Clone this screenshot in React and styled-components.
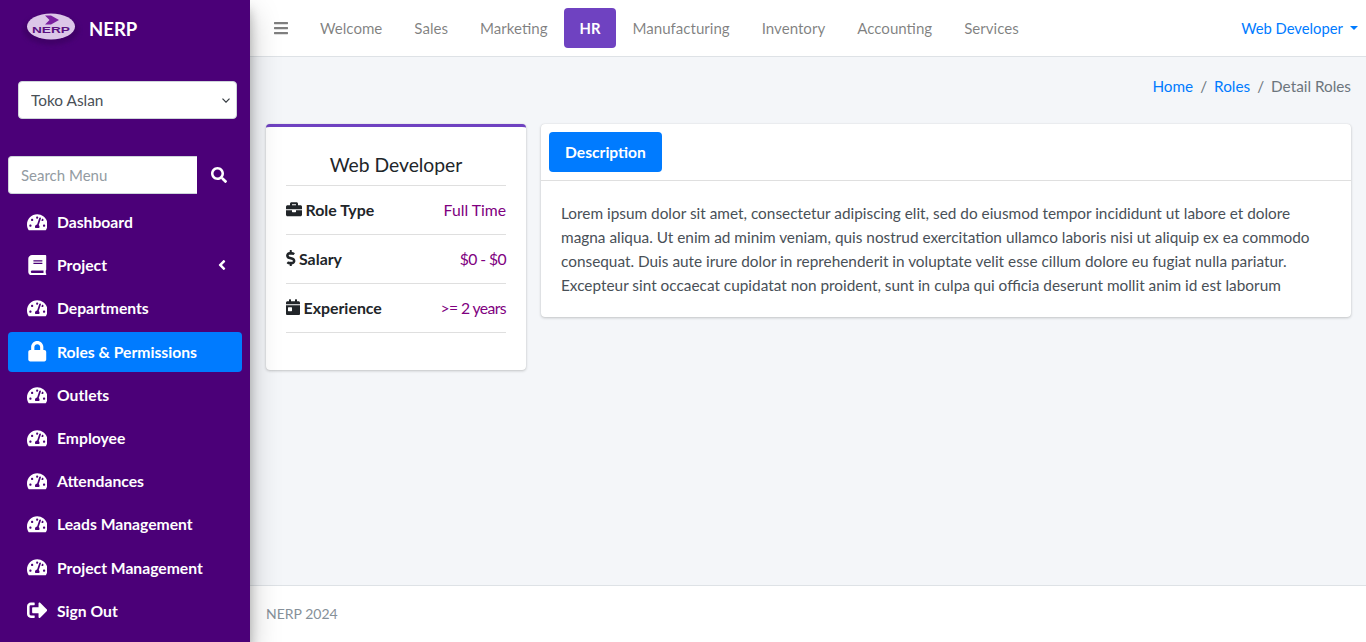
import React from "react";
import styled, { createGlobalStyle } from "styled-components";
import {
  FaTachometerAlt,
  FaBook,
  FaLock,
  FaSignOutAlt,
  FaSearch,
  FaBars,
  FaAngleLeft,
  FaBriefcase,
  FaDollarSign,
  FaCalendarDay,
} from "react-icons/fa";

const GlobalStyle = createGlobalStyle`
  * { box-sizing: border-box; }
  html, body { margin: 0; padding: 0; height: 100%; }
  body {
    font-family: "Lato", "Open Sans", sans-serif;
    font-size: 15.4px;
    color: #212529;
    background: #f4f6f9;
  }
  #root { height: 100%; }
`;

const Page = styled.div`
  display: flex;
  height: 642px;
  overflow: hidden;
`;

const Sidebar = styled.aside`
  width: 250px;
  flex: none;
  background: #4b0078;
  box-shadow: 0 14px 28px rgba(0, 0, 0, 0.25), 0 10px 10px rgba(0, 0, 0, 0.22);
  z-index: 5;
  display: flex;
  flex-direction: column;
`;

const Brand = styled.div`
  height: 57px;
  display: flex;
  align-items: center;
  padding-left: 21px;
`;

const BrandName = styled.span`
  color: #fff;
  font-size: 18.5px;
  font-weight: 700;
  margin-left: 6px;
`;

const OutletBox = styled.div`
  padding: 24px 13px 37px 18px;
`;

const OutletSelect = styled.select`
  display: block;
  width: 100%;
  height: 38px;
  padding: 6px 20px 6px 12px;
  font: inherit;
  color: #495057;
  border: 1px solid #ced4da;
  border-radius: 4px;
  appearance: none;
  background: #fff
    url("data:image/svg+xml,%3Csvg xmlns='http://www.w3.org/2000/svg' width='8' height='5' viewBox='0 0 8 5'%3E%3Cpath d='M.5.7 4 4.2 7.500.7' fill='none' stroke='%23343a40' stroke-width='1.2'/%3E%3C/svg%3E")
    no-repeat right 6px center;
`;

const SearchRow = styled.div`
  display: flex;
  align-items: center;
  padding: 0 8px;
  margin-bottom: 8px;
`;

const SearchInput = styled.input`
  width: 189px;
  height: 38px;
  padding: 6px 13px 6px 12px;
  font: inherit;
  font-size: 15px;
  color: #495057;
  background: #fff;
  border: 1px solid #ced4da;
  border-right: 0;
  border-radius: 4px 0 0 4px;
  &::placeholder {
    color: #939ba2;
    opacity: 1;
  }
`;

const SearchButton = styled.button`
  width: 44px;
  height: 38px;
  display: flex;
  align-items: center;
  justify-content: center;
  padding: 0;
  border: 0;
  background: transparent;
  color: #fff;
  font-size: 16px;
`;

const Menu = styled.nav`
  display: flex;
  flex-direction: column;
  gap: 3.2px;
  padding: 0 8px;
`;

const MenuItem = styled.a`
  display: flex;
  align-items: center;
  height: 40px;
  padding: 0 16px;
  border-radius: 4px;
  color: #fff;
  font-weight: 700;
  font-size: 15.7px;
  text-decoration: none;
  background: ${({ $active }) => ($active ? "#007bff" : "transparent")};
`;

const MenuIcon = styled.span`
  width: 26px;
  margin-right: 7px;
  display: flex;
  justify-content: center;
  font-size: 20.5px;
`;

const MenuArrow = styled.span`
  margin-left: auto;
  display: flex;
  font-size: 16px;
  svg {
    width: 8px;
  }
`;

const Main = styled.div`
  flex: 1;
  min-width: 0;
  display: flex;
  flex-direction: column;
`;

const TopBar = styled.header`
  height: 57px;
  flex: none;
  display: flex;
  align-items: center;
  background: #fff;
  border-bottom: 1px solid #dee2e6;
  padding: 0 8px 1px;
`;

const TopLink = styled.a`
  display: flex;
  align-items: center;
  height: 40px;
  padding: 0 16px;
  border-radius: 4px;
  text-decoration: none;
  font-size: ${({ $active }) => ($active ? "14.8px" : "15.1px")};
  color: ${({ $active }) => ($active ? "#fff" : "rgba(0, 0, 0, 0.5)")};
  background: ${({ $active }) => ($active ? "#6f42c1" : "transparent")};
  font-weight: ${({ $active }) => ($active ? 700 : 400)};
  svg {
    font-size: 16px;
    width: 14px;
  }
`;

const UserMenu = styled.a`
  margin-left: auto;
  display: flex;
  align-items: center;
  font-size: 14.8px;
  color: #007bff;
  text-decoration: none;
  &::after {
    content: "";
    margin-left: 7px;
    border-top: 4.8px solid;
    border-left: 4.8px solid transparent;
    border-right: 4.8px solid transparent;
  }
`;

const Content = styled.main`
  flex: 1;
  padding: 0 15px 0 16px;
`;

const Breadcrumb = styled.ol`
  display: flex;
  justify-content: flex-end;
  list-style: none;
  margin: 0;
  padding: 20px 0 0;
  height: 67px;
  font-size: 15.3px;
  color: #6c757d;
`;

const Crumb = styled.li`
  & + &::before {
    content: "/";
    padding: 0 7px;
    color: #6c757d;
  }
  a {
    color: #007bff;
    text-decoration: none;
  }
`;

const Columns = styled.div`
  display: flex;
  align-items: flex-start;
  gap: 15px;
`;

const Card = styled.section`
  background: #fff;
  border-radius: 4px;
  box-shadow: 0 0 1px rgba(0, 0, 0, 0.125), 0 1px 3px rgba(0, 0, 0, 0.2);
`;

const RoleCard = styled(Card)`
  width: 260px;
  flex: none;
  border-top: 3px solid #6f42c1;
  padding: 20px 20px 37px;
`;

const RoleTitle = styled.h3`
  margin: 0;
  height: 39px;
  padding-top: 6px;
  text-align: center;
  font-size: 19.3px;
  font-weight: 400;
  color: #212529;
  border-bottom: 1px solid #dfdfdf;
`;

const RoleRow = styled.div`
  display: flex;
  align-items: center;
  justify-content: space-between;
  height: 49px;
  padding-bottom: 2px;
  border-bottom: 1px solid #dfdfdf;
`;

const RoleLabel = styled.span`
  display: flex;
  align-items: center;
  gap: 3.500px;
  font-weight: 700;
  font-size: 15.9px;
  color: #212529;
  svg {
    font-size: 16.5px;
    width: ${({ $iconWidth }) => $iconWidth}px;
  }
`;

const RoleValue = styled.span`
  color: #800080;
  font-size: 15.75px;
  letter-spacing: ${({ $tight }) => ($tight ? "-0.6px" : "0")};
`;

const DescriptionCard = styled(Card)`
  flex: 1;
  min-width: 0;
`;

const TabBar = styled.div`
  height: 57px;
  padding: 8px;
  border-bottom: 1px solid #dfdfdf;
`;

const TabButton = styled.a`
  display: inline-flex;
  align-items: center;
  justify-content: center;
  width: 113px;
  height: 40px;
  background: #007bff;
  border-radius: 4px;
  color: #fff;
  font-weight: 700;
  font-size: 15.6px;
`;

const DescriptionText = styled.p`
  margin: 0;
  padding: 20px;
  line-height: 24px;
  color: #495057;
  font-size: 15.36px;
`;

const Footer = styled.footer`
  height: 57px;
  flex: none;
  display: flex;
  align-items: center;
  padding: 0 16px 2px;
  background: #fff;
  border-top: 1px solid #dee2e6;
  color: #869099;
  font-size: 14px;
`;

const Logo = () => (
  <svg width="62" height="46" viewBox="0 0 62 46">
    <defs>
      <filter id="logo-shadow" x="-20%" y="-20%" width="140%" height="140%">
        <feGaussianBlur stdDeviation="2" />
      </filter>
    </defs>
    <ellipse cx="30" cy="24" rx="28" ry="15" fill="#3f0068" filter="url(#logo-shadow)" />
    <ellipse cx="30" cy="20.5" rx="24" ry="13" fill="#dcc6e8" />
    <path d="M24 9.5h6l8 4.5-8 4.500h-6l4.500-4.500z" fill="#7a1fa0" />
    <text
      x="30"
      y="26.500"
      textAnchor="middle"
      textLength="38"
      lengthAdjust="spacingAndGlyphs"
      fontFamily="Liberation Sans"
      fontWeight="700"
      fontSize="9"
      fill="#5a1080"
    >
      NERP
    </text>
  </svg>
);

const menuItems = [
  { label: "Dashboard", icon: FaTachometerAlt },
  { label: "Project", icon: FaBook, arrow: true },
  { label: "Departments", icon: FaTachometerAlt },
  { label: "Roles & Permissions", icon: FaLock, active: true },
  { label: "Outlets", icon: FaTachometerAlt },
  { label: "Employee", icon: FaTachometerAlt },
  { label: "Attendances", icon: FaTachometerAlt },
  { label: "Leads Management", icon: FaTachometerAlt },
  { label: "Project Management", icon: FaTachometerAlt },
  { label: "Sign Out", icon: FaSignOutAlt },
];

const topLinks = ["Welcome", "Sales", "Marketing", "HR", "Manufacturing", "Inventory", "Accounting", "Services"];

const roleRows = [
  { label: "Role Type", value: "Full Time", icon: FaBriefcase, iconWidth: 16 },
  { label: "Salary", value: "$0 - $0", icon: FaDollarSign, iconWidth: 9.5, tight: true },
  { label: "Experience", value: ">= 2 years", icon: FaCalendarDay, iconWidth: 14, tight: true },
];

const App = () => (
  <Page>
    <GlobalStyle />
    <Sidebar>
      <Brand>
        <Logo />
        <BrandName>NERP</BrandName>
      </Brand>
      <OutletBox>
        <OutletSelect defaultValue="Toko Aslan">
          <option>Toko Aslan</option>
        </OutletSelect>
      </OutletBox>
      <SearchRow>
        <SearchInput placeholder="Search Menu" />
        <SearchButton>
          <FaSearch />
        </SearchButton>
      </SearchRow>
      <Menu>
        {menuItems.map(({ label, icon: Icon, active, arrow }) => (
          <MenuItem key={label} $active={active}>
            <MenuIcon>
              <Icon />
            </MenuIcon>
            {label}
            {arrow && (
              <MenuArrow>
                <FaAngleLeft />
              </MenuArrow>
            )}
          </MenuItem>
        ))}
      </Menu>
    </Sidebar>
    <Main>
      <TopBar>
        <TopLink>
          <FaBars />
        </TopLink>
        {topLinks.map((link) => (
          <TopLink key={link} $active={link === "HR"}>
            {link}
          </TopLink>
        ))}
        <UserMenu>Web Developer</UserMenu>
      </TopBar>
      <Content>
        <Breadcrumb>
          <Crumb>
            <a>Home</a>
          </Crumb>
          <Crumb>
            <a>Roles</a>
          </Crumb>
          <Crumb>Detail Roles</Crumb>
        </Breadcrumb>
        <Columns>
          <RoleCard>
            <RoleTitle>Web Developer</RoleTitle>
            {roleRows.map(({ label, value, icon: Icon, iconWidth, tight }) => (
              <RoleRow key={label}>
                <RoleLabel $iconWidth={iconWidth}>
                  <Icon />
                  {label}
                </RoleLabel>
                <RoleValue $tight={tight}>{value}</RoleValue>
              </RoleRow>
            ))}
          </RoleCard>
          <DescriptionCard>
            <TabBar>
              <TabButton>Description</TabButton>
            </TabBar>
            <DescriptionText>
              Lorem ipsum dolor sit amet, consectetur adipiscing elit, sed do eiusmod tempor incididunt ut labore et
              dolore magna aliqua. Ut enim ad minim veniam, quis nostrud exercitation ullamco laboris nisi ut aliquip ex
              ea commodo consequat. Duis aute irure dolor in reprehenderit in voluptate velit esse cillum dolore eu
              fugiat nulla pariatur. Excepteur sint occaecat cupidatat non proident, sunt in culpa qui officia deserunt
              mollit anim id est laborum
            </DescriptionText>
          </DescriptionCard>
        </Columns>
      </Content>
      <Footer>NERP 2024</Footer>
    </Main>
  </Page>
);

export default App;
